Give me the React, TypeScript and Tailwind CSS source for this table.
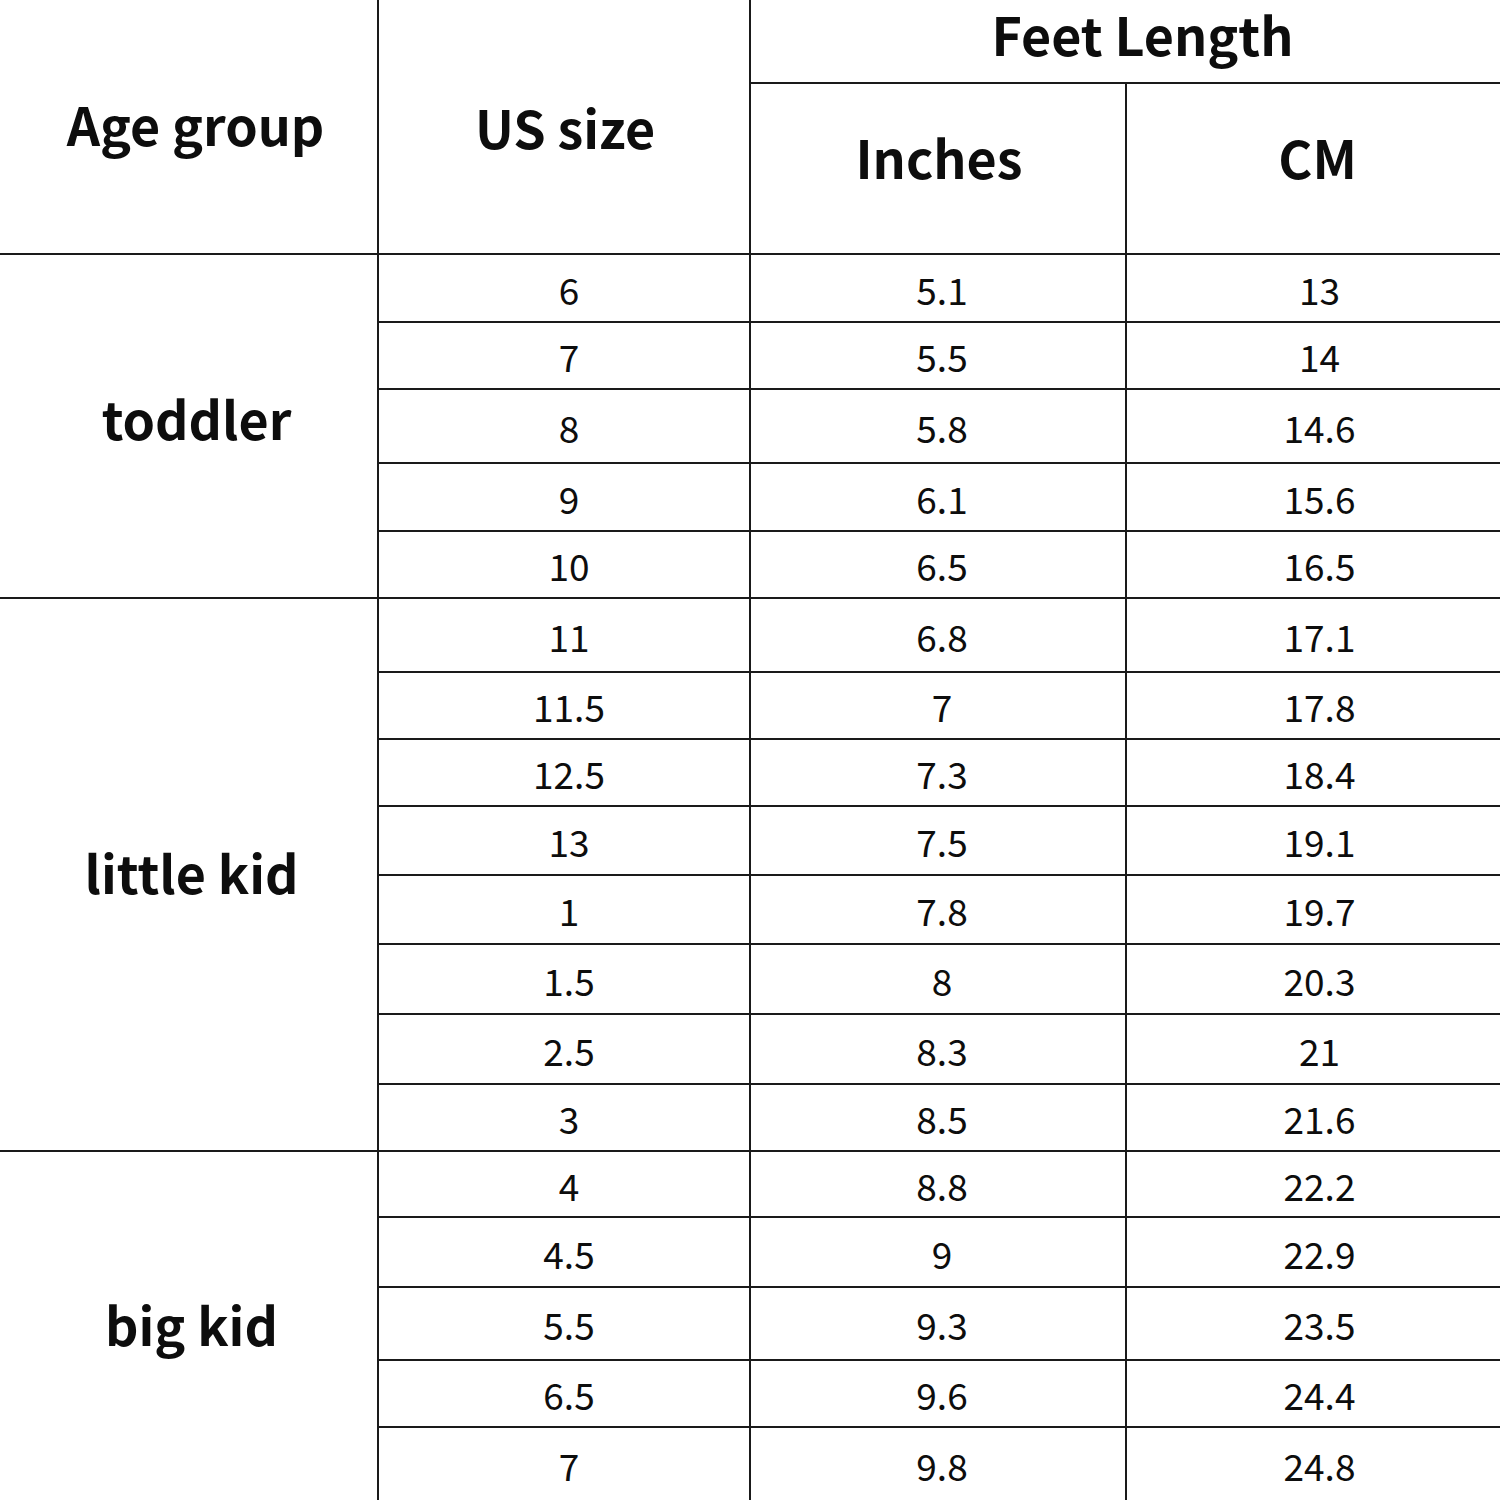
import React from "react";

// rows of the size chart: [us size, inches, cm, row height]
const rows: [string, string, string, string][] = [
  ["6", "5.1", "13", "h-[68px]"],
  ["7", "5.5", "14", "h-[67px]"],
  ["8", "5.8", "14.6", "h-[74px]"],
  ["9", "6.1", "15.6", "h-[68px]"],
  ["10", "6.5", "16.5", "h-[67px]"],
  ["11", "6.8", "17.1", "h-[74px]"],
  ["11.5", "7", "17.8", "h-[67px]"],
  ["12.5", "7.3", "18.4", "h-[67px]"],
  ["13", "7.5", "19.1", "h-[69px]"],
  ["1", "7.8", "19.7", "h-[69px]"],
  ["1.5", "8", "20.3", "h-[70px]"],
  ["2.5", "8.3", "21", "h-[70px]"],
  ["3", "8.5", "21.6", "h-[67px]"],
  ["4", "8.8", "22.2", "h-[66px]"],
  ["4.5", "9", "22.9", "h-[70px]"],
  ["5.5", "9.3", "23.5", "h-[73px]"],
  ["6.5", "9.6", "24.4", "h-[67px]"],
  ["7", "9.8", "24.8", "h-[73px]"],
];

// age group starts at row index: label, rows spanned, nudge
const groups: Record<number, [string, number, string]> = {
  0: ["toddler", 5, "pl-[16px] -translate-y-[8px]"],
  5: ["little kid", 8, "pl-[6px] -translate-y-[3px]"],
  13: ["big kid", 5, "pl-[6px] -translate-y-[2px]"],
};

const cell = "border-2 border-[#1a1a1a] p-0 text-center align-middle leading-none";

export default function App() {
  return (
    <div
      className="w-[1500px] h-[1500px] bg-white text-[#0d0d0d] overflow-hidden"
      style={{ fontFamily: '"Noto Sans CJK SC", "Noto Sans", sans-serif' }}
    >
      <table className="w-[1500px] border-collapse border-hidden table-fixed">
        <colgroup>
          <col className="w-[378px]" />
          <col className="w-[372px]" />
          <col className="w-[376px]" />
          <col className="w-[374px]" />
        </colgroup>
        <thead>
          <tr>
            <th rowSpan={2} className={`${cell} text-[52px] font-bold`}>
              <div className="pl-[14px] -translate-y-[3px]">Age group</div>
            </th>
            <th rowSpan={2} className={`${cell} text-[52px] font-bold`}>
              <div className="pl-[2px]">US size</div>
            </th>
            <th colSpan={2} className={`${cell} h-[83px] text-[52px] font-bold`}>
              <div className="pl-[34px] -translate-y-[7px]">Feet Length</div>
            </th>
          </tr>
          <tr>
            <th className={`${cell} h-[171px] text-[52px] font-bold`}>
              <div className="pl-[2px] -translate-y-[12px]">Inches</div>
            </th>
            <th className={`${cell} h-[171px] text-[52px] font-bold`}>
              <div className="pl-[8px] -translate-y-[12px]">CM</div>
            </th>
          </tr>
        </thead>
        <tbody>
          {rows.map(([us, inch, cm, h], i) => (
            <tr key={i}>
              {groups[i] && (
                <td rowSpan={groups[i][1]} className={`${cell} text-[52px] font-bold`}>
                  <div className={groups[i][2]}>{groups[i][0]}</div>
                </td>
              )}
              <td className={`${cell} ${h} text-[37px]`}>
                <div className="pl-[10px] translate-y-[1px]">{us}</div>
              </td>
              <td className={`${cell} ${h} text-[37px]`}>
                <div className="pl-[8px] translate-y-[1px]">{inch}</div>
              </td>
              <td className={`${cell} ${h} text-[37px]`}>
                <div className="pl-[12px] translate-y-[1px]">{cm}</div>
              </td>
            </tr>
          ))}
        </tbody>
      </table>
    </div>
  );
}
